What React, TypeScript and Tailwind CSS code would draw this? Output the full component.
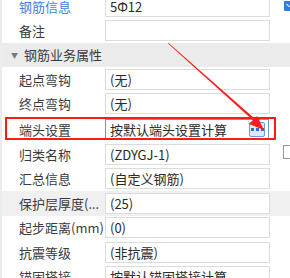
import React from 'react'

const font = { fontFamily: '"Noto Sans CJK SC", "Noto Sans", sans-serif' }

type Row = { label: string; value: string; hover?: boolean; blue?: boolean }

const topRows: Row[] = [
  { label: '钢筋信息', value: '5Ф12', blue: true },
  { label: '备注', value: '' },
]

const rows: Row[] = [
  { label: '起点弯钩', value: '(无)' },
  { label: '终点弯钩', value: '(无)' },
]

const lowerRows: Row[] = [
  { label: '归类名称', value: '(ZDYGJ-1)' },
  { label: '汇总信息', value: '(自定义钢筋)' },
  { label: '保护层厚度(...', value: '(25)', hover: true },
  { label: '起步距离(mm)', value: '(0)' },
  { label: '抗震等级', value: '(非抗震)' },
  { label: '锚固搭接', value: '按默认锚固搭接计算' },
]

function PropRow({ row }: { row: Row }) {
  return (
    <div className={`flex h-[24.5px] items-center ${row.hover ? 'bg-[#f0f0f0]' : ''}`}>
      <div
        className={`w-[105px] shrink-0 pl-[19px] text-[13px] leading-none whitespace-nowrap ${
          row.blue ? 'text-[#3d7fe6]' : 'text-[#3a3a3a]'
        }`}
      >
        {row.label}
      </div>
      <div className="flex h-[21px] w-[165px] shrink-0 items-center border border-[#dcdcdc] bg-white pl-[4px] text-[13px] leading-none text-[#2a2a2a]">
        {row.value}
      </div>
    </div>
  )
}

export default function App() {
  return (
    <div className="relative h-[278px] w-[290px] overflow-hidden bg-white" style={font}>
      <div className="absolute left-0 top-0 h-full w-[2px] bg-[#ececec]" />
      <div className="mt-[-6px]">
        {topRows.map((r) => (
          <PropRow key={r.label} row={r} />
        ))}
        <div className="flex h-[24px] items-center bg-[#ebebeb] text-[13px] text-[#3a3a3a]">
          <span className="ml-[11px] mr-[6px] text-[7px] text-[#777]">▼</span>
          钢筋业务属性
        </div>
        {rows.map((r) => (
          <PropRow key={r.label} row={r} />
        ))}
        {/* 端头设置 - selected row */}
        <div className="flex h-[26px] items-center">
          <div className="w-[105px] shrink-0 pl-[19px] text-[13px] leading-none text-[#3a3a3a]">端头设置</div>
          <div className="flex h-[20px] w-[164px] shrink-0 items-center justify-between border border-[#7094d8] bg-white pl-[4px] pr-[3px] text-[13px] leading-none text-[#2a2a2a]">
            <span>按默认端头设置计算</span>
            <span className="flex h-[15px] w-[16px] items-center justify-center gap-[2px] rounded-[2px] border border-[#6a9be0] bg-[#dde9f8]">
              <span className="h-[3px] w-[3px] bg-[#2f6fd0]" />
              <span className="h-[3px] w-[3px] bg-[#2f6fd0]" />
              <span className="h-[3px] w-[3px] bg-[#2f6fd0]" />
            </span>
          </div>
        </div>
        {lowerRows.map((r) => (
          <PropRow key={r.label} row={r} />
        ))}
      </div>

      {/* top right blue icon */}
      <div className="absolute right-[-4px] top-[1px] h-[10px] w-[10px] rounded-[1px] bg-[#2f7be0]">
        <div className="ml-[2px] mt-[4px] h-[1px] w-[4px] rotate-45 bg-white" />
      </div>
      {/* checkbox partially visible */}
      <div className="absolute left-[283px] top-[145px] h-[14px] w-[14px] border border-[#999] bg-white" />

      {/* red annotation box */}
      <div className="absolute left-[5px] top-[117px] h-[23px] w-[271px] border-2 border-[#ff1a1a]" />
      {/* red arrow */}
      <svg className="absolute left-0 top-0" width="290" height="278">
        <polygon points="168,43.5 168.6,43 258,121.5 256.5,123.5" fill="#ff1a1a" />
        <polygon points="264,130 249,124 257,116" fill="#ff1a1a" />
      </svg>
    </div>
  )
}
